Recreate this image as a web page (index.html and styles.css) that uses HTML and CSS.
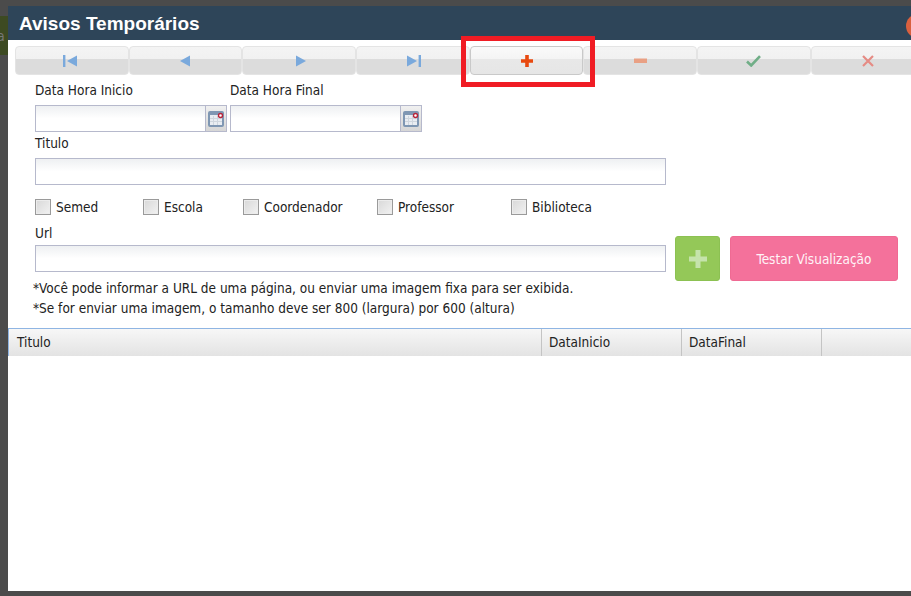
FILE: index.html
```html
<!DOCTYPE html>
<html lang="pt">
<head>
<meta charset="utf-8">
<title>Avisos Temporários</title>
<link rel="stylesheet" href="styles.css">
</head>
<body>
<div class="backdrop-strip"><span class="strip-text">a</span></div>
<main class="modal">
  <header class="modal-head">
    <h1 class="modal-title">Avisos Temporários</h1>
    <span class="close-dot"></span>
  </header>
  <nav class="toolbar">
    <button class="tool"><svg class="ico ico-left" width="16" height="12" viewBox="0 0 16 12"><path d="M1 0h2.400v12H1z" fill="#7aa9dc"/><path d="M15 .5v11L5 6z" fill="#7aa9dc"/></svg></button>
    <button class="tool"><svg class="ico ico-left" width="12" height="12" viewBox="0 0 12 12"><path d="M12 .5v11L2 6z" fill="#7aa9dc"/></svg></button>
    <button class="tool"><svg class="ico ico-right" width="12" height="12" viewBox="0 0 12 12"><path d="M1 .5v11L11 6z" fill="#7aa9dc"/></svg></button>
    <button class="tool"><svg class="ico ico-right" width="16" height="12" viewBox="0 0 16 12"><path d="M1 .5v11L11 6z" fill="#7aa9dc"/><path d="M12.600 0H15v12h-2.400z" fill="#7aa9dc"/></svg></button>
    <button class="tool tool-active"><svg class="ico" width="12" height="12" viewBox="0 0 12 12"><path d="M4.200 0h3.600v4.200H12v3.600H7.800V12H4.200V7.800H0V4.200h4.200z" fill="#e8490f"/></svg></button>
    <button class="tool"><svg class="ico" width="13" height="6" viewBox="0 0 13 6"><path d="M0 .5h13V5H0z" fill="#e9a084"/></svg></button>
    <button class="tool"><svg class="ico" width="15" height="12" viewBox="0 0 15 12"><path d="M1 6.500l4.200 4L14 1.200" fill="none" stroke="#70ae87" stroke-width="2.600"/></svg></button>
    <button class="tool"><svg class="ico" width="12" height="12" viewBox="0 0 12 12"><path d="M1 1l10 10M11 1L1 11" fill="none" stroke="#e58b84" stroke-width="2.200"/></svg></button>
  </nav>
  <form class="form">
    <div class="date-row">
      <div class="field">
        <label class="label">Data Hora Inicio</label>
        <div class="date-input"><span class="input-well"></span><span class="cal-btn"><svg width="16" height="16" viewBox="0 0 16 16"><rect x="1" y="1" width="14" height="14" rx="1" fill="#e9edf2" stroke="#7f97b3" stroke-width="2"/><rect x="1" y="1" width="14" height="3" fill="#7f97b3"/><path d="M5.500 5v9M9.500 5v9M2 7.500h12M2 10.500h12" stroke="#cfd6de"/><circle cx="12.500" cy="4.500" r="2" fill="#fff" stroke="#b8263a" stroke-width="1.400"/></svg></span></div>
      </div>
      <div class="field">
        <label class="label">Data Hora Final</label>
        <div class="date-input"><span class="input-well"></span><span class="cal-btn"><svg width="16" height="16" viewBox="0 0 16 16"><rect x="1" y="1" width="14" height="14" rx="1" fill="#e9edf2" stroke="#7f97b3" stroke-width="2"/><rect x="1" y="1" width="14" height="3" fill="#7f97b3"/><path d="M5.500 5v9M9.500 5v9M2 7.500h12M2 10.500h12" stroke="#cfd6de"/><circle cx="12.500" cy="4.500" r="2" fill="#fff" stroke="#b8263a" stroke-width="1.400"/></svg></span></div>
      </div>
    </div>
    <div class="field field-title">
      <label class="label">Titulo</label>
      <span class="input-well wide"></span>
    </div>
    <div class="checks">
      <label class="check check-semed"><span class="box"></span>Semed</label>
      <label class="check check-escola"><span class="box"></span>Escola</label>
      <label class="check check-coord"><span class="box"></span>Coordenador</label>
      <label class="check check-prof"><span class="box"></span>Professor</label>
      <label class="check"><span class="box"></span>Biblioteca</label>
    </div>
    <div class="url-row">
      <div class="field">
        <label class="label">Url</label>
        <span class="input-well wide"></span>
      </div>
      <button class="btn-add" type="button"><svg width="18" height="18" viewBox="0 0 18 18"><path d="M6.500 0h5v6.500H18v5h-6.500V18h-5v-6.500H0v-5h6.500z" fill="#c5e3ab"/></svg></button>
      <button class="btn-test" type="button">Testar Visualização</button>
    </div>
    <p class="notes">*Você pode informar a URL de uma página, ou enviar uma imagem fixa para ser exibida.<br>*Se for enviar uma imagem, o tamanho deve ser 800 (largura) por 600 (altura)</p>
  </form>
  <div class="grid-head">
    <div class="col col-title">Titulo</div>
    <div class="col col-date">DataInicio</div>
    <div class="col col-date">DataFinal</div>
    <div class="col col-rest"></div>
  </div>
</main>
<div class="highlight"></div>
</body>
</html>
```
FILE: styles.css
```css
html, body { margin: 0; padding: 0; }
body {
  width: 911px;
  height: 596px;
  overflow: hidden;
  background: #4b4b4b;
  font-family: "DejaVu Sans Condensed", "DejaVu Sans", sans-serif;
  font-stretch: condensed;
  font-size: 13.500px;
  color: #222;
  position: relative;
}
.backdrop-strip {
  position: absolute;
  left: 0;
  top: 16px;
  width: 8px;
  height: 39px;
  background: #3d4a22;
  overflow: hidden;
}
.strip-text { position: absolute; left: -3px; top: 12px; color: #777; font-size: 14px; }
.modal {
  position: absolute;
  left: 8px;
  top: 6px;
  width: 903px;
  height: 585px;
  background: #fff;
  overflow: hidden;
}
.modal-head {
  height: 34px;
  box-sizing: border-box;
  padding: 2px 0 0 11px;
  background: #2e4559;
  display: flex;
  align-items: center;
  position: relative;
}
.modal-title {
  margin: 0;
  font-family: "Liberation Sans", Arial, sans-serif;
  font-stretch: normal;
  font-size: 19px;
  font-weight: bold;
  color: #fff;
}
.close-dot {
  position: absolute;
  left: 898px;
  top: 8px;
  width: 24px;
  height: 24px;
  border-radius: 50%;
  background: #d9603f;
}
.toolbar {
  display: flex;
  margin: 6px 0 0 7px;
  width: 910px;
}
.tool {
  flex: 0 0 113.700px;
  height: 29px;
  margin: 0;
  padding: 0;
  border: 1px solid #e4e4e4;
  border-radius: 4px;
  background: linear-gradient(#f4f4f4 0, #f1f1f1 45%, #dcdcdc 46%, #dcdcdc 100%);
  display: flex;
  align-items: center;
  justify-content: center;
  box-sizing: border-box;
}
.tool-active {
  background: linear-gradient(#fafafa 0, #f4f4f4 45%, #e8e8e8 46%, #e6e6e6 100%);
  border-color: #c9c9c9;
}
.ico-left { margin-right: 3px; }
.ico-right { margin-left: 3px; }
.form { padding: 0 0 0 27px; }
.date-row { display: flex; gap: 3px; margin-top: 6px; }
.field { display: flex; flex-direction: column; }
.label { line-height: 19px; height: 24px; color: #222; display: block; box-sizing: border-box; }
.date-input { display: flex; width: 192px; height: 27px; box-sizing: border-box; border: 1px solid #b6b9cc; }
.date-input .input-well { flex: 1; border: 0; height: auto; }
.input-well {
  display: block;
  height: 27px;
  box-sizing: border-box;
  border: 1px solid #b6b9cc;
  background: linear-gradient(#eef0f2 0, #fff 50%);
}
.wide { width: 631px; }
.cal-btn {
  width: 21px;
  background: linear-gradient(#f0f0f0, #d6d6d6);
  border-left: 1px solid #b6b9cc;
  display: flex;
  align-items: center;
  justify-content: center;
  box-sizing: border-box;
}
.field-title .label { height: 26px; padding-top: 2px; }
.checks { display: flex; margin-top: 14px; height: 16px; line-height: 18px; }
.check { display: flex; align-items: center; width: 134px; color: #222; }
.check-semed { width: 108px; }
.check-escola { width: 100px; }
.box {
  width: 16px;
  height: 16px;
  box-sizing: border-box;
  border: 1px solid #9a9a9a;
  background: linear-gradient(135deg, #d8d8d8, #f2f2f2);
  box-shadow: inset 0 0 0 1px #ececec;
  margin-right: 5px;
}
.url-row { display: flex; margin-top: 8px; align-items: flex-start; }
.url-row .field { padding-top: 1px; margin-right: 9px; }
.url-row .label { height: 21px; }
.btn-add {
  width: 45px;
  height: 45px;
  margin: 13px 10px 0 0;
  padding: 0;
  border: 1px solid #8cc152;
  border-radius: 3px;
  background: #94c858;
  display: flex;
  align-items: center;
  justify-content: center;
  box-sizing: border-box;
}
.btn-test {
  width: 168px;
  height: 45px;
  margin-top: 13px;
  border: 1px solid #ef6a93;
  border-radius: 3px;
  background: #f4719b;
  color: #fff3f7;
  font: inherit;
  padding: 0;
}
.notes { margin: -3px 0 0 -2px; line-height: 20px; color: #222; }
.grid-head {
  display: flex;
  margin-top: 10px;
  height: 28px;
  box-sizing: border-box;
  border-top: 1px solid #8fb5e3;
  border-left: 1px solid #8fb5e3;
  background: linear-gradient(#f7f7f7, #e3e3e3);
  line-height: 26px;
}
.col { box-sizing: border-box; padding-left: 7px; border-right: 1px solid #c4c4c4; }
.col-title { width: 533px; padding-left: 8px; }
.col-date { width: 140px; }
.col-rest { flex: 1; border-right: 0; }
.highlight {
  position: absolute;
  left: 461px;
  top: 36px;
  width: 134px;
  height: 51px;
  box-sizing: border-box;
  border: 5px solid #f01c24;
  pointer-events: none;
}
```
